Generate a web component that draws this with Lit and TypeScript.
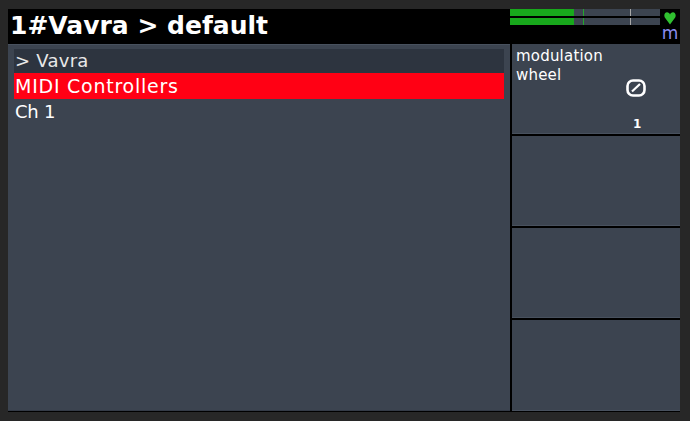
import { LitElement, html, css } from "lit";
import { customElement } from "lit/decorators.js";

@customElement("app-root")
export class AppRoot extends LitElement {
  static styles = css`
    :host { display: block; width: 690px; height: 421px; background: #272727; box-sizing: border-box; padding: 9px 10px 9px 8px; font-family: "DejaVu Sans", sans-serif; color: #fff; overflow: hidden; }
    .app { width: 672px; height: 403px; display: flex; flex-direction: column; background: #000; border-bottom: 1px solid #000; box-sizing: border-box; }
    .header { height: 34px; flex: none; display: flex; background: #000; }
    .title { flex: 1; font-size: 25px; font-weight: 700; line-height: 33px; padding-left: 2px; white-space: nowrap; }
    .meters { width: 150px; display: flex; flex-direction: column; gap: 2px; }
    .meter { height: 7px; background: #3c4450; position: relative; }
    .meter .fill { position: absolute; left: 0; top: 0; bottom: 0; width: 64px; background: #18a81c; }
    .meter .g { position: absolute; left: 73px; top: 0; bottom: 0; width: 1px; background: #24a82c; }
    .meter .w { position: absolute; left: 120px; top: 0; bottom: 0; width: 1px; background: #a8a8a8; }
    .status { width: 20px; display: flex; flex-direction: column; align-items: center; }
    .status svg { display: block; margin-top: 2px; }
    .m { font-size: 17px; line-height: 14px; color: #8c8cf0; margin-top: 1px; }
    .body { flex: 1; display: flex; gap: 2px; margin-top: 1px; min-height: 0; }
    .left { width: 502px; background: #3c4450; padding: 5px 6px 0 6px; box-sizing: border-box; flex: none; border-top: 1px solid #48515e; border-bottom: 1px solid #343b47; }
    .row { height: 25px; line-height: 25px; font-size: 19px; padding-left: 1px; white-space: nowrap; letter-spacing: 0.75px; }
    .crumb { background: #2d343f; color: #e8e8e8; height: 24px; line-height: 24px; font-size: 18px; letter-spacing: 0.25px; margin-top: -1px; }
    .sel { background: #ff0014; height: 26px; line-height: 26px; }
    .plain { font-size: 18px; letter-spacing: -0.2px; }
    .right { flex: 1; display: grid; grid-template-rows: 90px 90px 90px 1fr; gap: 2px; }
    .cell { background: #3c4450; position: relative; padding: 3px 4px; font-size: 15px; line-height: 19px; letter-spacing: 0.2px; border-bottom: 1px solid #48515e; }
    .dial { position: absolute; left: 114px; top: 35px; }
    .val { position: absolute; left: 121px; top: 72px; font-size: 12px; line-height: 16px; letter-spacing: 0; font-weight: 700; }
  `;

  render() {
    return html`<div class="app">
      <div class="header">
        <div class="title">1#Vavra &gt; default</div>
        <div class="meters">
          <div class="meter"><div class="fill"></div><div class="g"></div><div class="w"></div></div>
          <div class="meter"><div class="fill"></div><div class="g"></div><div class="w"></div></div>
        </div>
        <div class="status">
          <svg width="12" height="14" viewBox="0 0 12 14"><path d="M6 13.5 L0.8 6.5 C-0.4 4 0.8 1.2 3 1.2 C4.5 1.2 5.5 2.2 6 3.4 C6.5 2.2 7.5 1.2 9 1.2 C11.2 1.2 12.4 4 11.2 6.5 Z" fill="#30c030"/></svg>
          <div class="m">m</div>
        </div>
      </div>
      <div class="body">
        <div class="left">
          <div class="row crumb">&gt; Vavra</div>
          <div class="row sel">MIDI Controllers</div>
          <div class="row plain">Ch 1</div>
        </div>
        <div class="right">
          <div class="cell">modulation<br />wheel
            <svg class="dial" width="20" height="18" viewBox="0 0 20 18"><rect x="1.5" y="1.5" width="17" height="15" rx="5.5" fill="none" stroke="#fff" stroke-width="2.6"/><path d="M6 12.5 L14 5" stroke="#fff" stroke-width="2.2"/></svg>
            <div class="val">1</div>
          </div>
          <div class="cell"></div>
          <div class="cell"></div>
          <div class="cell"></div>
        </div>
      </div>
    </div>`;
  }
}
